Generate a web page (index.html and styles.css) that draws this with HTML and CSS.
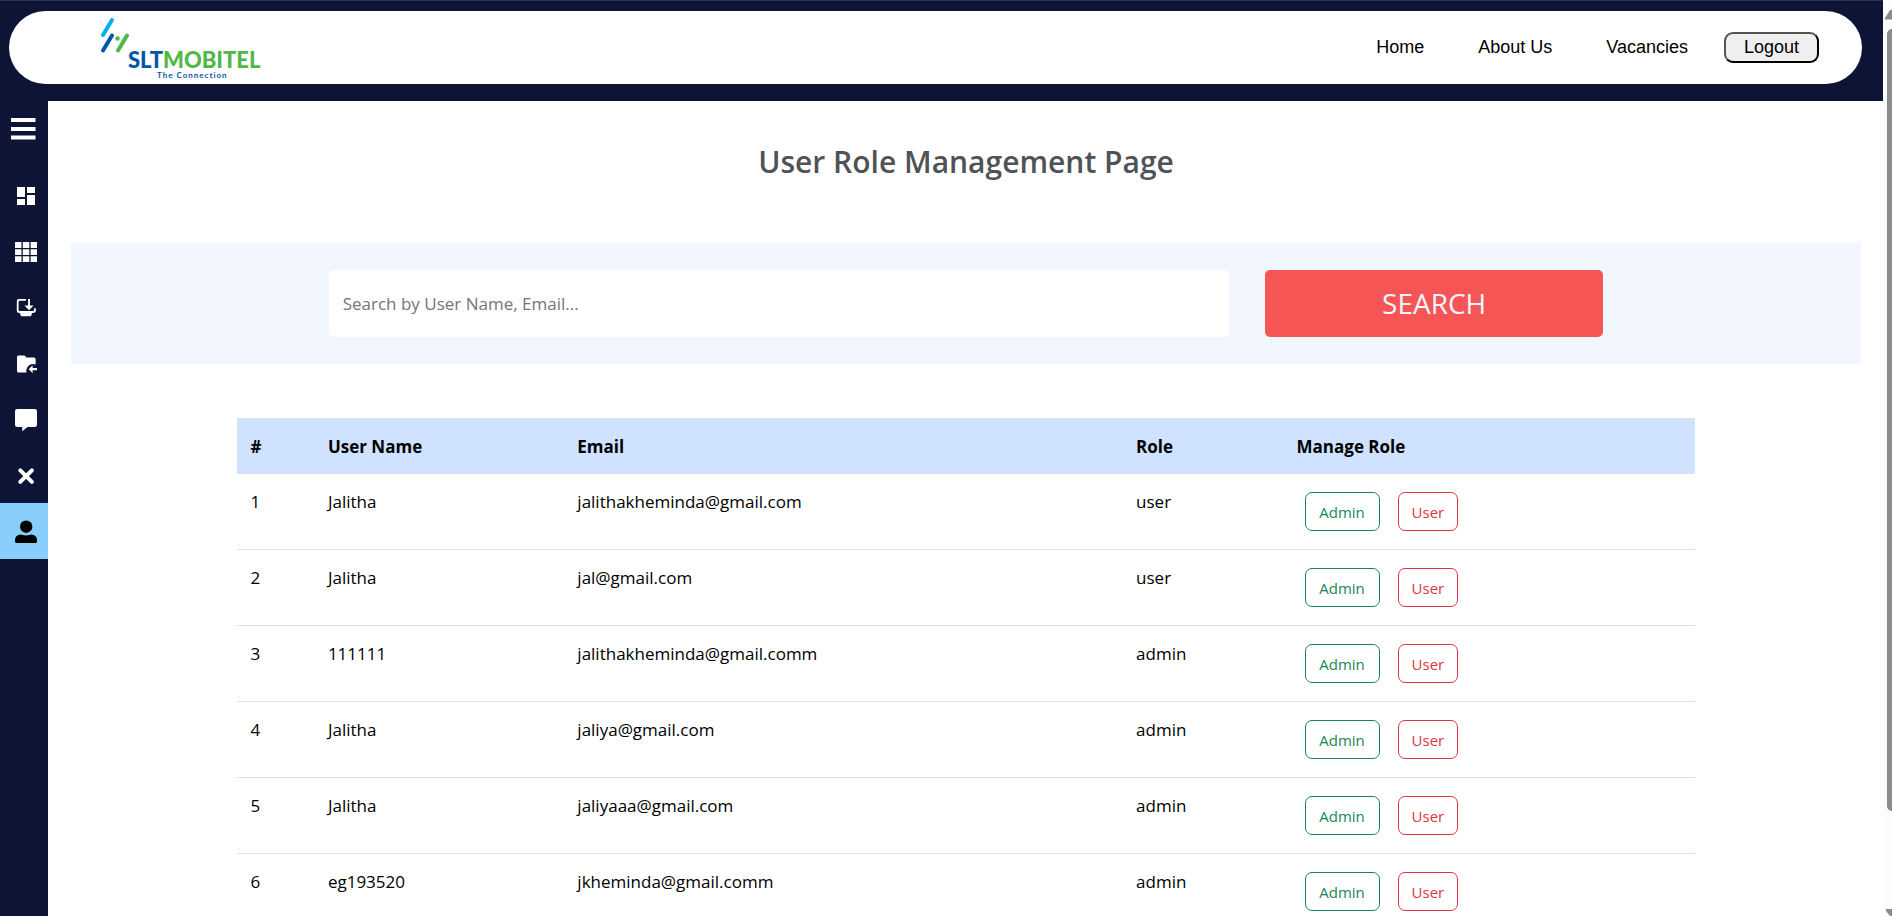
FILE: index.html
```html
<!DOCTYPE html>
<html lang="en">
<head>
<meta charset="utf-8">
<title>User Role Management</title>
<link rel="stylesheet" href="styles.css">
</head>
<body>
<div class="window">
  <div class="app">
    <header class="header">
      <div class="navbar">
        <svg class="logo" viewBox="0 0 180 73" role="img" aria-label="SLT Mobitel, The Connection">
          <g fill="none" stroke-width="4" stroke-linecap="round">
            <path stroke="#00b0ea" d="M13 24L22 9"/>
            <path stroke="#0057a8" d="M13 39.500L22 24.500"/>
            <path stroke="#50b848" d="M28 39.500L37 24.500"/>
          </g>
          <circle cx="27.500" cy="27.500" r="2.200" fill="#50b848"/>
          <text class="logo-name" x="38" y="57"><tspan fill="#0057a8">SLT</tspan><tspan fill="#50b848">MOBITEL</tspan></text>
          <text class="logo-tag" x="67" y="67">The Connection</text>
        </svg>
        <nav class="nav">
          <a href="#">Home</a>
          <a href="#">About Us</a>
          <a href="#">Vacancies</a>
        </nav>
        <button class="logout" type="button">Logout</button>
      </div>
    </header>
    <div class="body">
      <aside class="sidebar">
        <button class="menu-toggle" type="button" aria-label="Toggle menu">
          <svg width="26" height="24" viewBox="0 0 26 24"><path fill="#fff" d="M1 1h24.500v4H1zM1 10h24.500v4H1zM1 18.500h24.500v4H1z"/></svg>
        </button>
        <a class="side-link" href="#" aria-label="Dashboard"><svg viewBox="0 0 24 24"><path d="M3 13h8V3H3v10zm0 8h8v-6H3v6zm10 0h8V11h-8v10zm0-18v6h8V3h-8z"/></svg></a>
        <a class="side-link" href="#" aria-label="Grid"><svg viewBox="0 0 24 24"><path d="M1 2h6.500v6H1zM8.800 2h6.500v6H8.800zM16.600 2H23v6h-6.400zM1 9.200h6.500v5.700H1zM8.800 9.200h6.500v5.700H8.800zM16.600 9.200H23v5.700h-6.400zM1 16.200h6.500V22H1zM8.800 16.200h6.500V22H8.800zM16.600 16.200H23V22h-6.400z"/></svg></a>
        <a class="side-link" href="#" aria-label="Install"><svg viewBox="0 0 24 24"><path d="M12 3H5a2.200 2.200 0 0 0-2.200 2.200v9.600A2.200 2.200 0 0 0 5 17h1.200v1.500l1 1.700h9.600l1-1.700V17H19a3 3 0 0 0 2.900-2.800v-2h-1.800V14a1 1 0 0 1-1 1H5.600a1 1 0 0 1-1-1V5.800a1 1 0 0 1 1-1H12z"/><path d="M14.100 3h1.900v6.500h3.500L15 14.200l-4.500-4.700h3.600z"/></svg></a>
        <a class="side-link" href="#" aria-label="Folder"><svg viewBox="0 0 24 24"><path d="M3 5a1.500 1.500 0 0 1 1.500-1.600h6l2 2H20A1.600 1.600 0 0 1 21.600 7v5.600a7 7 0 0 0-3.600-.6 7 7 0 0 0-5.500 8.500h-8A1.500 1.500 0 0 1 3 19z"/><path d="M18.600 13.300v2.700H23v2.200h-4.400v3L14.700 17.200z"/></svg></a>
        <a class="side-link" href="#" aria-label="Messages"><svg viewBox="0 0 24 24"><path d="M3.200 1h17.600A2.200 2.200 0 0 1 23 3.200v13.600a2.200 2.200 0 0 1-2.200 2.200H13.500L8.200 23.200V19h-5A2.200 2.200 0 0 1 1 16.800V3.200A2.200 2.200 0 0 1 3.200 1z"/></svg></a>
        <a class="side-link" href="#" aria-label="Close"><svg viewBox="0 0 24 24"><path fill="none" stroke="#fff" stroke-width="4" stroke-linecap="round" d="M6.300 6.300l11.600 11.600M17.900 6.300L6.300 17.900"/></svg></a>
        <a class="side-link active" href="#" aria-label="Users" aria-current="page"><svg viewBox="0 0 24 24"><circle cx="12.200" cy="6.700" r="6.200"/><path d="M1 19.700a5.400 5.400 0 0 1 5.400-5.200c1.600 0 2.800.9 5.600.9s4-.9 5.600-.9a5.400 5.400 0 0 1 5.400 5.200v1.700a1.700 1.700 0 0 1-1.700 1.600H2.700A1.700 1.700 0 0 1 1 21.400z"/></svg></a>
      </aside>
      <main class="content">
        <h1 class="title">User Role Management Page</h1>
        <form class="search">
          <input class="search-input" type="text" aria-label="Search users" placeholder="Search by User Name, Email...">
          <button class="search-button" type="button">SEARCH</button>
        </form>
        <table class="users">
          <colgroup><col class="col-id"><col class="col-name"><col class="col-email"><col class="col-role"><col></colgroup>
          <thead>
            <tr><th scope="col">#</th><th scope="col">User Name</th><th scope="col">Email</th><th scope="col">Role</th><th scope="col">Manage Role</th></tr>
          </thead>
          <tbody>
            <tr><td>1</td><td>Jalitha</td><td>jalithakheminda@gmail.com</td><td>user</td><td><div class="actions"><button class="btn admin" type="button">Admin</button><button class="btn user" type="button">User</button></div></td></tr>
            <tr><td>2</td><td>Jalitha</td><td>jal@gmail.com</td><td>user</td><td><div class="actions"><button class="btn admin" type="button">Admin</button><button class="btn user" type="button">User</button></div></td></tr>
            <tr><td>3</td><td>111111</td><td>jalithakheminda@gmail.comm</td><td>admin</td><td><div class="actions"><button class="btn admin" type="button">Admin</button><button class="btn user" type="button">User</button></div></td></tr>
            <tr><td>4</td><td>Jalitha</td><td>jaliya@gmail.com</td><td>admin</td><td><div class="actions"><button class="btn admin" type="button">Admin</button><button class="btn user" type="button">User</button></div></td></tr>
            <tr><td>5</td><td>Jalitha</td><td>jaliyaaa@gmail.com</td><td>admin</td><td><div class="actions"><button class="btn admin" type="button">Admin</button><button class="btn user" type="button">User</button></div></td></tr>
            <tr><td>6</td><td>eg193520</td><td>jkheminda@gmail.comm</td><td>admin</td><td><div class="actions"><button class="btn admin" type="button">Admin</button><button class="btn user" type="button">User</button></div></td></tr>
          </tbody>
        </table>
      </main>
    </div>
  </div>
  <div class="scrollbar" aria-hidden="true">
    <svg class="arrow" viewBox="0 0 9 10"><path d="M2 9.500V8l5-8h2v9.500z"/></svg>
    <div class="thumb"></div>
    <svg class="arrow-down" viewBox="0 0 9 7"><path d="M3 0h6v7H7L3 2z"/></svg>
  </div>
</div>
</body>
</html>
```

FILE: styles.css
```css
* {
  box-sizing: border-box;
}

body {
  margin: 0;
  background: #fff;
  color: #000;
  font-family: "Open Sans", "Noto Sans", sans-serif;
  font-size: 17px;
  line-height: 28px;
}

a {
  color: inherit;
  text-decoration: none;
}

button,
input {
  font: inherit;
}

.window {
  display: flex;
  height: 100vh;
  overflow: hidden;
}

.app {
  flex: 1;
  display: flex;
  flex-direction: column;
  min-width: 0;
}

.header {
  padding: 10px 21px 17px 9px;
  border-top: 1px solid #2b3150;
  background: #0d1436;
}

.navbar {
  display: flex;
  align-items: center;
  height: 73px;
  padding: 0 43px 0 81px;
  border-radius: 37px;
  background: #fff;
  font-family: "Liberation Sans", Arial, sans-serif;
  font-size: 18px;
}

.logo {
  width: 180px;
  height: 73px;
}

.logo-name {
  font: 900 22px Lato, sans-serif;
}

.logo-tag {
  fill: #0057a8;
  font: 700 8px Lato, sans-serif;
  letter-spacing: 1px;
}

.nav {
  display: flex;
  gap: 54px;
  margin-left: auto;
  padding-bottom: 2px;
}

.logout {
  width: 95px;
  height: 31px;
  margin-left: 36px;
  padding: 0 0 2px;
  border: 2px outset #000;
  border-radius: 9px;
  background: #efefef;
  color: #000;
  line-height: 24px;
}

.body {
  flex: 1;
  display: flex;
  min-height: 0;
}

.sidebar {
  flex: none;
  width: 48px;
  background: #0d1436;
}

.menu-toggle {
  display: block;
  width: 46px;
  height: 66px;
  padding: 16px 10px 26px;
  border: 0;
  background: none;
}

.menu-toggle svg {
  display: block;
}

.side-link {
  display: flex;
  align-items: center;
  height: 56px;
  padding: 2px 0 0 14px;
}

.side-link svg {
  width: 24px;
  height: 24px;
  fill: #fff;
}

.side-link.active {
  background: #87cefa;
}

.side-link.active svg {
  fill: #000;
}

.content {
  flex: 1;
  min-width: 0;
  padding: 39px 22px 0 23px;
}

.title {
  margin: 0 0 59px;
  color: #4f5357;
  font-size: 30px;
  font-weight: 600;
  line-height: 44px;
  text-align: center;
}

.search {
  display: flex;
  justify-content: center;
  gap: 36px;
  padding: 27px 0;
  background: #f1f6ff;
}

.search-input {
  width: 50.3%;
  height: 67px;
  padding: 0 14px;
  border: 0;
  border-radius: 5px;
  background: #fff;
}

.search-input::placeholder {
  color: #757575;
}

.search-button {
  width: 18.9%;
  padding: 0 0 2px;
  border: 0;
  border-radius: 5px;
  background: #f65556;
  color: #f1f6ff;
  font-size: 28px;
}

.users {
  width: 81.5%;
  margin: 54px auto 0;
  border-collapse: collapse;
  table-layout: fixed;
}

.col-id {
  width: 5.3%;
}

.col-name {
  width: 17.1%;
}

.col-email {
  width: 38.3%;
}

.col-role {
  width: 11%;
}

.users th,
.users td {
  padding: 14px;
  border-bottom: 1px solid #dee2e6;
  text-align: left;
  vertical-align: top;
}

.users th {
  padding-bottom: 12px;
  border-top: 1px solid #dee2e6;
  background: #cfe2ff;
  font-weight: 700;
}

.actions {
  display: flex;
  gap: 18px;
  padding: 4px 8px;
}

.btn {
  height: 39px;
  padding: 0 13px;
  border: 1px solid;
  border-radius: 7px;
  background: #fff;
  font-size: 15px;
}

.admin {
  min-width: 75px;
  color: #198754;
}

.user {
  color: #dc3545;
}

.scrollbar {
  flex: none;
  display: flex;
  flex-direction: column;
  width: 9px;
  padding-top: 10px;
  background: #fcfcfc;
}

.scrollbar svg {
  fill: #8b8b8b;
}

.arrow {
  height: 10px;
  margin-bottom: 9px;
}

.thumb {
  height: 86.3%;
  margin-left: 4px;
  border-radius: 5px 0 0 5px;
  background: #8b8b8b;
}

.arrow-down {
  height: 7px;
  margin-top: auto;
}
```
